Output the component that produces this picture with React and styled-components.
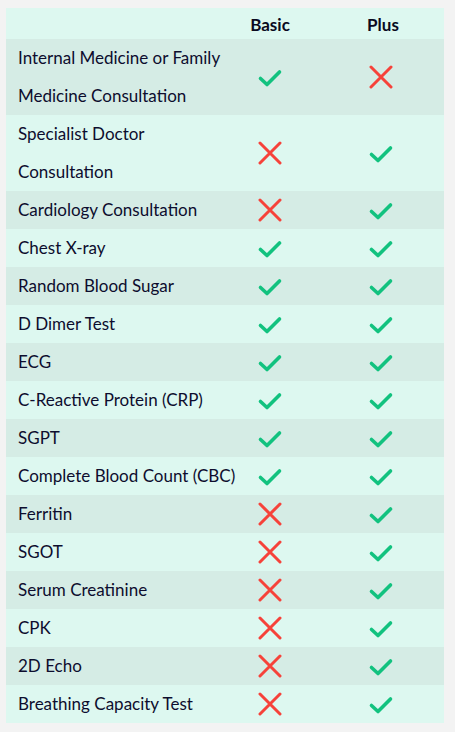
import React from "react";
import styled, { createGlobalStyle } from "styled-components";

const GlobalStyle = createGlobalStyle`
  body {
    margin: 0;
    background: #f3f3f3;
    font-family: Lato, "Liberation Sans", sans-serif;
  }
`;

const rows = [
  ["Internal Medicine or Family Medicine Consultation", true, false, true],
  ["Specialist Doctor Consultation", false, true, true],
  ["Cardiology Consultation", false, true],
  ["Chest X-ray", true, true],
  ["Random Blood Sugar", true, true],
  ["D Dimer Test", true, true],
  ["ECG", true, true],
  ["C-Reactive Protein (CRP)", true, true],
  ["SGPT", true, true],
  ["Complete Blood Count (CBC)", true, true],
  ["Ferritin", false, true],
  ["SGOT", false, true],
  ["Serum Creatinine", false, true],
  ["CPK", false, true],
  ["2D Echo", false, true],
  ["Breathing Capacity Test", false, true],
];

const Check = () => (
  <svg width="26" height="26" viewBox="0 0 26 26" style={{ marginTop: 2 }}>
    <path
      d="M3.5 13.5 L10 19.5 L22.5 7"
      fill="none"
      stroke="#12c27f"
      strokeWidth="3.6"
      strokeLinecap="round"
      strokeLinejoin="round"
    />
  </svg>
);

const Cross = () => (
  <svg width="24" height="24" viewBox="0 0 24 24">
    <path
      d="M2 2 L22 22 M22 2 L2 22"
      fill="none"
      stroke="#f6423a"
      strokeWidth="3"
      strokeLinecap="round"
    />
  </svg>
);

const App = () => {
  return (
    <>
      <GlobalStyle />
      <Page>
        <Table>
          <HeaderRow>
            <div />
            <HeadCell>Basic</HeadCell>
            <HeadCell $shift>Plus</HeadCell>
          </HeaderRow>
          {rows.map(([name, basic, plus, tall], i) => (
            <Row key={name} $dark={i % 2 === 0} $tall={tall}>
              <NameCell $tall={tall}>{name}</NameCell>
              <IconCell>{basic ? <Check /> : <Cross />}</IconCell>
              <IconCell $shift>{plus ? <Check /> : <Cross />}</IconCell>
            </Row>
          ))}
        </Table>
      </Page>
    </>
  );
};

const Page = styled.div`
  padding: 8px 11px 8px 6px;
`;

const Table = styled.div`
  width: 438px;
  background: #ddf8f0;
`;

const HeaderRow = styled.div`
  display: grid;
  grid-template-columns: 228px 72px 138px;
  height: 31px;
  align-items: center;
`;

const Row = styled.div`
  display: grid;
  grid-template-columns: 228px 72px 138px;
  align-items: center;
  min-height: ${(p) => (p.$tall ? "76px" : "38px")};
  background: ${(p) => (p.$dark ? "#d5ece5" : "#ddf8f0")};
`;

const HeadCell = styled.div`
  text-align: center;
  font-weight: 700;
  font-size: 17px;
  color: #0a0a1f;
  padding-top: 2px;
  padding-left: ${(p) => (p.$shift ? "16px" : "0")};
`;

const NameCell = styled.div`
  padding-left: 12px;
  padding-right: ${(p) => (p.$tall ? "12px" : "0")};
  font-size: 17px;
  line-height: 38px;
  color: #0d0d2e;
  white-space: ${(p) => (p.$tall ? "normal" : "nowrap")};
`;

const IconCell = styled.div`
  display: flex;
  justify-content: center;
  align-items: center;
  padding-left: ${(p) => (p.$shift ? "12px" : "0")};
`;

export default App;
